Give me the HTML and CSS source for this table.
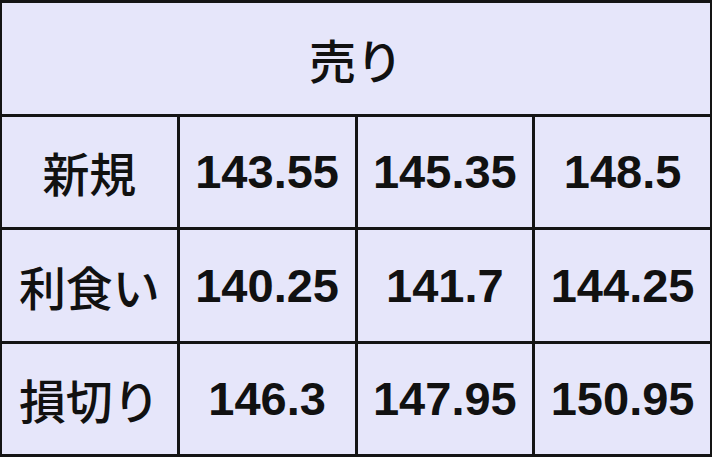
FILE: index.html
```html
<!DOCTYPE html>
<html lang="ja">
<head>
<meta charset="utf-8">
<link rel="stylesheet" href="styles.css">
</head>
<body>
<div class="table">
  <div class="cell head label">売り</div>
  <div class="cell label">新規</div>
  <div class="cell">143.55</div>
  <div class="cell">145.35</div>
  <div class="cell">148.5</div>
  <div class="cell label">利食い</div>
  <div class="cell">140.25</div>
  <div class="cell">141.7</div>
  <div class="cell">144.25</div>
  <div class="cell label">損切り</div>
  <div class="cell">146.3</div>
  <div class="cell">147.95</div>
  <div class="cell">150.95</div>
</div>
</body>
</html>
```
FILE: styles.css
```css
html, body {
  margin: 0;
  padding: 0;
  background: #e6e6fa;
}
.table {
  box-sizing: border-box;
  width: 712px;
  height: 457px;
  display: grid;
  grid-template-columns: repeat(4, 1fr);
  grid-template-rows: repeat(4, 1fr);
  gap: 3px;
  padding: 3px 2px;
  background: #141414;
}
.cell {
  background: #e6e6fa;
  display: flex;
  align-items: center;
  justify-content: center;
  font-family: "Liberation Sans", "Noto Sans CJK JP", sans-serif;
  font-weight: bold;
  font-size: 47px;
  color: #111;
}
.label {
  font-weight: 500;
}
.head {
  grid-column: 1 / span 4;
}
```
